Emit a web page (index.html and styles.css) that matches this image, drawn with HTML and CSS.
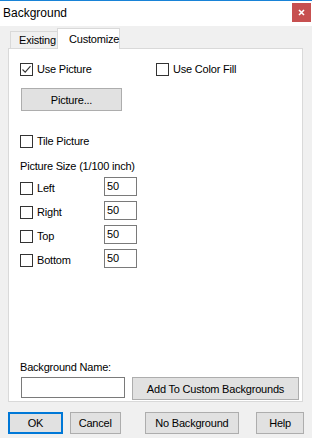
FILE: index.html
```html
<!DOCTYPE html>
<html lang="en">
<head>
    <meta charset="UTF-8">
    <title>Background</title>
    <link rel="stylesheet" href="styles.css">
</head>
<body>

    <div class="titlebar">
        <span class="title">Background</span>
        <span class="close">
            <svg width="19" height="19" viewBox="0 0 19 19">
                <path d="M7 7 L12 12 M12 7 L7 12" stroke="#fff" stroke-width="1.6" fill="none"/>
            </svg>
        </span>
    </div>

    <div class="dialog">
        <div class="tabs">
            <div class="tab">Existing</div>
            <div class="tab active">Customize</div>
        </div>

        <div class="panel">
            <div class="top-row">
                <div class="check use-picture">
                    <span class="box">
                        <svg width="11" height="11" viewBox="0 0 11 11">
                            <path d="M1.5 5.5 L4.2 8.2 L9.5 2.2" stroke="#333" stroke-width="1.1" fill="none"/>
                        </svg>
                    </span>
                    Use Picture
                </div>
                <div class="check"><span class="box"></span>Use Color Fill</div>
            </div>

            <button class="btn picture-btn">Picture...</button>

            <div class="check tile"><span class="box"></span>Tile Picture</div>

            <div class="group-label">Picture Size (1/100 inch)</div>

            <div class="size-list">
                <div class="size-row">
                    <div class="check"><span class="box"></span>Left</div>
                    <input class="num" type="text" value="50">
                </div>
                <div class="size-row">
                    <div class="check"><span class="box"></span>Right</div>
                    <input class="num" type="text" value="50">
                </div>
                <div class="size-row">
                    <div class="check"><span class="box"></span>Top</div>
                    <input class="num" type="text" value="50">
                </div>
                <div class="size-row">
                    <div class="check"><span class="box"></span>Bottom</div>
                    <input class="num" type="text" value="50">
                </div>
            </div>

            <div class="name-section">
                <div class="name-label">Background Name:</div>
                <div class="name-row">
                    <input class="name-input" type="text">
                    <button class="btn add-btn">Add To Custom Backgrounds</button>
                </div>
            </div>
        </div>

        <div class="footer">
            <button class="btn ok-btn">OK</button>
            <button class="btn cancel-btn">Cancel</button>
            <button class="btn none-btn">No Background</button>
            <button class="btn help-btn">Help</button>
        </div>
    </div>

</body>
</html>
```

FILE: styles.css
```css
body {
    margin: 0;
    width: 312px;
    height: 438px;
    background-color: #f0f0f0;
    font-family: "Liberation Sans", Arial, sans-serif;
    font-size: 11px;
    letter-spacing: -0.2px;
    color: #000;
    overflow: hidden;
}

.titlebar {
    display: flex;
    justify-content: space-between;
    align-items: flex-start;
    height: 25px;
    background-color: #fff;
    border-top: 1px solid #1883d7;
}
.title {
    padding-left: 3px;
    font-size: 12px;
    letter-spacing: 0;
    line-height: 24px;
}
.close {
    display: block;
    width: 19px;
    height: 19px;
    margin-top: 2px;
    margin-right: 1px;
    background-color: #c75050;
}
.close svg {
    display: block;
}

.dialog {
    padding: 2px 8px 0 8px;
}

.tabs {
    display: flex;
    align-items: flex-end;
    padding-left: 2px;
}
.tab {
    box-sizing: border-box;
    width: 47px;
    height: 17px;
    padding-left: 8px;
    line-height: 16px;
    background-color: #f0f0f0;
    border: 1px solid #d9d9d9;
    border-bottom: none;
    border-right: none;
}
.tab.active {
    position: relative;
    z-index: 1;
    width: 63px;
    height: 21px;
    margin-bottom: -1px;
    padding-left: 11px;
    padding-top: 4px;
    line-height: 13px;
    background-color: #fff;
    border-right: 1px solid #d9d9d9;
}

.panel {
    box-sizing: border-box;
    display: flex;
    flex-direction: column;
    align-items: flex-start;
    width: 295px;
    height: 354px;
    padding: 14px 0 1px 11px;
    background-color: #fff;
    border: 1px solid #d9d9d9;
}

.check {
    display: flex;
    align-items: center;
    gap: 4px;
    height: 13px;
    line-height: 13px;
    white-space: nowrap;
}
.box {
    box-sizing: border-box;
    display: block;
    width: 13px;
    height: 13px;
    background-color: #fff;
    border: 1px solid #333;
}
.box svg {
    display: block;
}

.top-row {
    display: flex;
}
.use-picture {
    width: 136px;
}

.btn {
    box-sizing: border-box;
    height: 22px;
    padding: 0;
    font-family: inherit;
    font-size: 11px;
    letter-spacing: -0.2px;
    color: #000;
    background-color: #e1e1e1;
    border: 1px solid #adadad;
    border-radius: 0;
}

.picture-btn {
    width: 101px;
    height: 23px;
    margin: 12px 0 0 1px;
}

.tile {
    margin-top: 24px;
}

.group-label {
    margin-top: 12px;
    line-height: 13px;
}

.size-list {
    display: flex;
    flex-direction: column;
    gap: 5px;
    margin-top: 4px;
}
.size-row {
    display: flex;
    align-items: flex-end;
    height: 19px;
}
.size-row .check {
    width: 84px;
    margin-bottom: 1px;
}
.num {
    box-sizing: border-box;
    width: 33px;
    height: 19px;
    margin: 0;
    padding: 0 0 2px 2px;
    font-family: inherit;
    font-size: 11px;
    letter-spacing: -0.2px;
    border: 1px solid #7a7a7a;
    border-radius: 0;
    outline: none;
}

.name-section {
    margin-top: auto;
}
.name-label {
    line-height: 13px;
}
.name-row {
    display: flex;
    align-items: flex-start;
    margin-top: 3px;
}
.name-input {
    box-sizing: border-box;
    width: 104px;
    height: 21px;
    margin: 0 0 0 1px;
    border: 1px solid #7a7a7a;
    border-radius: 0;
    outline: none;
}
.add-btn {
    width: 167px;
    height: 23px;
    margin-left: 7px;
}

.footer {
    display: flex;
    margin-top: 10px;
}
.ok-btn {
    width: 55px;
    border: 2px solid #0078d7;
}
.cancel-btn {
    width: 51px;
    margin-left: 7px;
}
.none-btn {
    width: 95px;
    margin-left: 24px;
}
.help-btn {
    width: 48px;
    margin-left: 17px;
}
```
